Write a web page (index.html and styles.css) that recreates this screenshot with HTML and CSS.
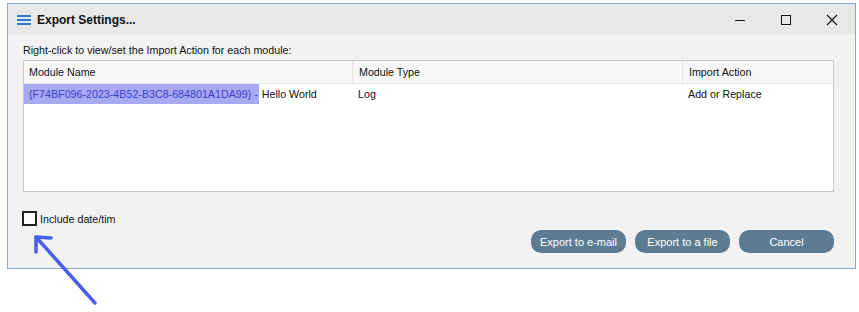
FILE: index.html
```html
<!DOCTYPE html>
<html lang="en">
<head>
  <meta charset="UTF-8">
  <title>Export Settings</title>
  <link rel="stylesheet" href="styles.css">
</head>
<body>

  <div class="window">
    <div class="titlebar">
      <svg class="appIcon" width="14" height="10" viewBox="0 0 14 10">
        <rect x="0" y="0" width="14" height="2" fill="#2b7bd6"/>
        <rect x="0" y="4" width="14" height="2" fill="#2b7bd6"/>
        <rect x="0" y="8" width="14" height="2" fill="#2b7bd6"/>
      </svg>
      <span class="title">Export Settings...</span>
      <div class="winControls">
        <span class="ctl">
          <svg width="12" height="12" viewBox="0 0 12 12"><line x1="1" y1="6.5" x2="11" y2="6.5" stroke="#111" stroke-width="1"/></svg>
        </span>
        <span class="ctl">
          <svg width="12" height="12" viewBox="0 0 12 12"><rect x="1.5" y="1.5" width="9" height="9" fill="none" stroke="#111" stroke-width="1"/></svg>
        </span>
        <span class="ctl">
          <svg width="12" height="12" viewBox="0 0 12 12"><path d="M1 1 L11 11 M11 1 L1 11" stroke="#111" stroke-width="1.1"/></svg>
        </span>
      </div>
    </div>

    <div class="content">
      <p class="hint">Right-click to view/set the Import Action for each module:</p>

      <div class="list">
        <div class="row head">
          <div class="cell c1">Module Name</div>
          <div class="cell c2">Module Type</div>
          <div class="cell c3">Import Action</div>
        </div>
        <div class="row">
          <div class="cell c1"><span class="sel">{F74BF096-2023-4B52-B3C8-684801A1DA99} -</span>Hello World</div>
          <div class="cell c2">Log</div>
          <div class="cell c3">Add or Replace</div>
        </div>
      </div>

      <div class="footer">
        <label class="check"><span class="box"></span>Include date/tim</label>
        <div class="actions">
          <button>Export to e-mail</button>
          <button>Export to a file</button>
          <button>Cancel</button>
        </div>
      </div>
    </div>
  </div>

  <!-- annotation arrow drawn over the screenshot -->
  <svg class="arrow" width="110" height="80" viewBox="0 0 110 80">
    <path d="M95 73 L36 7" stroke="#4a5ff2" stroke-width="3.5" stroke-linecap="round" fill="none"/>
    <path d="M36 7 L36 22 M36 7 L51 8" stroke="#4a5ff2" stroke-width="3.5" stroke-linecap="round" fill="none"/>
  </svg>

</body>
</html>
```

FILE: styles.css
```css
* { box-sizing: border-box; }
body {
  margin: 0;
  padding: 3px 0 0 0;
  height: 312px;
  background: #fff;
  font-family: 'Liberation Sans', Arial, sans-serif;
  font-size: 10.7px;
  color: #111;
  position: relative;
  overflow: hidden;
}
.window {
  margin-left: 7px;
  width: 849px;
  height: 266px;
  border: 1px solid #89a7d6;
  background: #f2f2f2;
  display: flex;
  flex-direction: column;
}
.titlebar {
  height: 31px;
  flex: none;
  background: #e8e8e8;
  display: flex;
  align-items: center;
  padding-left: 9px;
}
.appIcon {
  margin-right: 6px;
  margin-top: 1px;
}
.title {
  font-weight: bold;
  font-size: 12px;
}
.winControls {
  margin-left: auto;
  display: flex;
}
.ctl {
  width: 46px;
  display: flex;
  justify-content: center;
  align-items: center;
}
.content {
  flex: 1;
  padding: 9px 21px 0 15px;
  display: flex;
  flex-direction: column;
}
.hint {
  margin: 0 0 4px 0;
}
.list {
  height: 132px;
  flex: none;
  border: 1px solid #c8c8c8;
  background: #fff;
}
.row {
  display: flex;
  height: 20px;
  align-items: center;
}
.row.head {
  height: 23px;
  background: #f7f7f7;
  border-bottom: 1px solid #e4e4e4;
}
.cell {
  padding-left: 6px;
  height: 100%;
  display: flex;
  align-items: center;
  white-space: nowrap;
}
.head .cell + .cell {
  border-left: 1px solid #e4e4e4;
}
.c1 { width: 328px; }
.c2 { width: 330px; }
.c3 { flex: 1; }
.row .c1 { padding-left: 0; }
.head .c1 { padding-left: 5px; }
.sel {
  background: #a7aaf3;
  color: #3a3fc8;
  height: 20px;
  display: inline-flex;
  align-items: center;
  padding: 0 1px 0 5px;
  margin-right: 3px;
}
.footer {
  margin-top: 19px;
  display: flex;
  flex-direction: column;
}
.check {
  display: flex;
  align-items: center;
  margin-left: -1px;
}
.box {
  width: 15px;
  height: 15px;
  border: 2px solid #222;
  background: #fff;
  margin-right: 3px;
}
.actions {
  display: flex;
  justify-content: flex-end;
  gap: 9px;
  margin-top: 4px;
}
button {
  width: 95px;
  height: 23px;
  border: none;
  border-radius: 10px;
  background: #5e7c91;
  color: #fff;
  font-family: 'Liberation Sans', Arial, sans-serif;
  font-size: 11px;
  cursor: pointer;
}
.arrow {
  position: absolute;
  left: 0;
  top: 230px;
}
```
